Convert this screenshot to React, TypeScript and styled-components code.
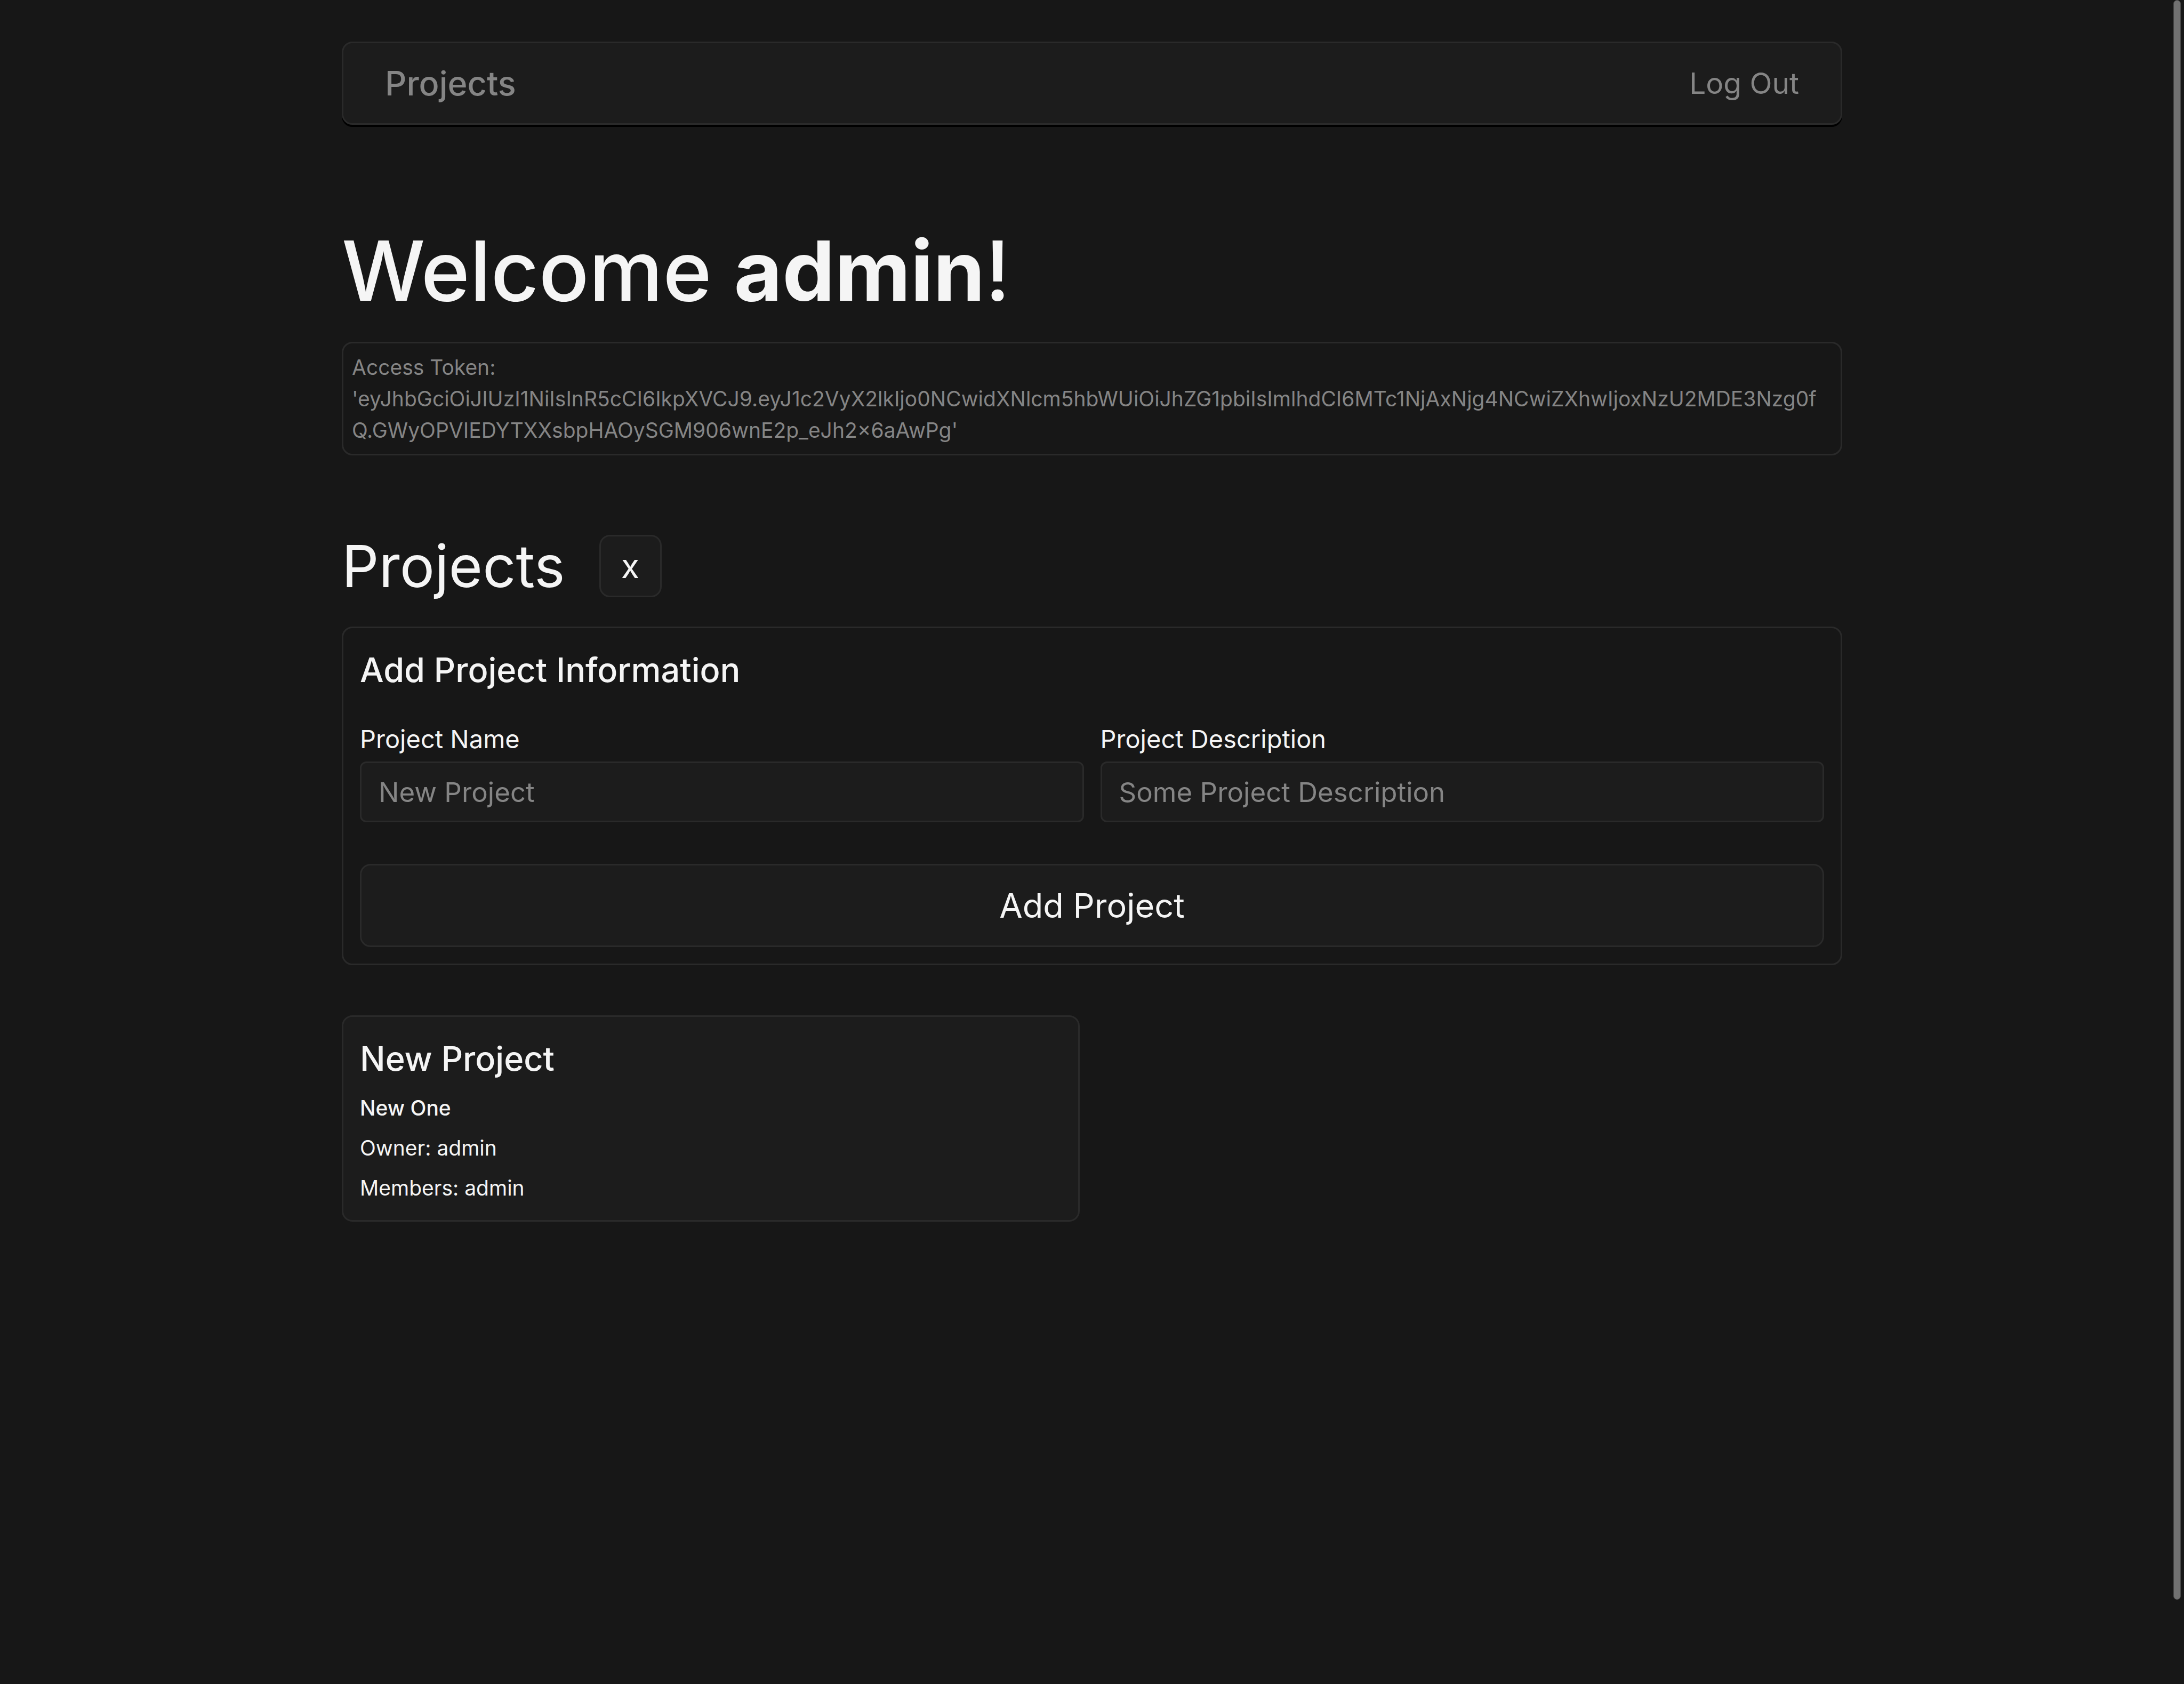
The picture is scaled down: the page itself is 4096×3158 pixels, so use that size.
import { useState } from "react";
import styled, { createGlobalStyle, css } from "styled-components";

const color = {
  page: "#171717",
  surface: "#1c1c1c",
  line: "#2a2a2a",
  text: "#f5f5f5",
  muted: "#858585",
  thumb: "#717171",
  thumbEdge: "#484848",
};

const GlobalStyle = createGlobalStyle`
  *, *::before, *::after { box-sizing: border-box; }
  body {
    margin: 0;
    background: ${color.page};
    color: ${color.text};
    font-family: Inter, "Liberation Sans", sans-serif;
    font-size: 39px;
    line-height: 59px;
  }
  h1, h2, h3, p { margin: 0; }
  button, input { font-family: inherit; color: inherit; }
`;

const outlined = css`
  border: 3px solid ${color.line};
  border-radius: 20px;
`;

const Page = styled.div`
  min-height: 100vh;
  padding: 78px 32px;
`;

const Container = styled.div`
  max-width: 2814px;
  margin: 0 auto;
`;

const NavBar = styled.nav`
  ${outlined}
  display: flex;
  align-items: center;
  justify-content: space-between;
  min-height: 156px;
  padding: 0 78px;
  background: ${color.surface};
  box-shadow: 0 4px 0 #000;
`;

const NavLink = styled.a<{ $brand?: boolean }>`
  color: ${color.muted};
  font-size: ${(p) => (p.$brand ? 63 : 55)}px;
  font-weight: ${(p) => (p.$brand ? 500 : 400)};
  line-height: 94px;
  text-decoration: none;
`;

const Welcome = styled.h1`
  margin-top: 157px;
  font-size: 156px;
  font-weight: 500;
  line-height: 234px;
`;

const TokenBox = styled.p`
  ${outlined}
  margin-top: 16px;
  padding: 15px 16px;
  color: ${color.muted};
  overflow-wrap: anywhere;
`;

const SectionHead = styled.div`
  display: flex;
  align-items: center;
  gap: 64px;
  margin-top: 125px;
`;

const SectionTitle = styled.h2`
  font-size: 109px;
  font-weight: 400;
  line-height: 164px;
`;

const Button = styled.button<{ $square?: boolean }>`
  ${outlined}
  width: ${(p) => (p.$square ? "117px" : "100%")};
  height: ${(p) => (p.$square ? 117 : 156)}px;
  padding: 0;
  background: ${color.surface};
  font-size: 63px;
  line-height: 94px;
  cursor: pointer;
`;

const Form = styled.form`
  ${outlined}
  margin-top: 32px;
  padding: 31px;
`;

const BlockTitle = styled.h3`
  font-size: 63px;
  font-weight: 500;
  line-height: 94px;
`;

const Fields = styled.div`
  display: grid;
  grid-template-columns: 1fr 1fr;
  gap: 31px;
  margin: 48px 0 78px;
`;

const Field = styled.div`
  display: flex;
  flex-direction: column;
  gap: 7px;
`;

const Label = styled.label`
  font-size: 47px;
  line-height: 70px;
`;

const TextInput = styled.input`
  width: 100%;
  height: 114px;
  padding: 0 32px;
  border: 3px solid ${color.line};
  border-radius: 12px;
  background: ${color.surface};
  font-size: 51px;
  outline: none;

  &::placeholder {
    color: ${color.muted};
    opacity: 1;
  }
`;

const ProjectGrid = styled.div`
  display: grid;
  grid-template-columns: 1fr 1fr;
  gap: 47px;
  margin-top: 94px;
`;

const ProjectCard = styled.article`
  ${outlined}
  display: flex;
  flex-direction: column;
  gap: 16px;
  padding: 31px;
  background: ${color.surface};
`;

const CardText = styled.p<{ $strong?: boolean }>`
  font-weight: ${(p) => (p.$strong ? 500 : 400)};
`;

const ScrollThumb = styled.div`
  position: fixed;
  top: 0;
  right: 6px;
  width: 14px;
  height: 95vh;
  border: 1px solid ${color.thumbEdge};
  border-radius: 7px;
  background: ${color.thumb};
`;

const token =
  "eyJhbGciOiJIUzI1NiIsInR5cCI6IkpXVCJ9.eyJ1c2VyX2lkIjo0NCwidXNlcm5hbWUiOiJhZG1pbiIsImlhdCI6MTc1NjAxNjg4NCwiZXhwIjoxNzU2MDE3Nzg0fQ.GWyOPVIEDYTXXsbpHAOySGM906wnE2p_eJh2x6aAwPg";

const projects = [
  { name: "New Project", description: "New One", owner: "admin", members: ["admin"] },
];

export default function App() {
  const [open, setOpen] = useState(true);

  return (
    <>
      <GlobalStyle />
      <Page>
        <Container>
          <NavBar>
            <NavLink $brand href="#projects">Projects</NavLink>
            <NavLink href="#logout">Log Out</NavLink>
          </NavBar>

          <main>
            <Welcome>
              Welcome <b>admin</b>!
            </Welcome>
            <TokenBox>{`Access Token: '${token}'`}</TokenBox>

            <SectionHead id="projects">
              <SectionTitle>Projects</SectionTitle>
              <Button $square type="button" onClick={() => setOpen(!open)}>
                {open ? "x" : "+"}
              </Button>
            </SectionHead>

            {open && (
              <Form onSubmit={(e) => e.preventDefault()}>
                <BlockTitle>Add Project Information</BlockTitle>
                <Fields>
                  <Field>
                    <Label htmlFor="name">Project Name</Label>
                    <TextInput id="name" type="text" placeholder="New Project" />
                  </Field>
                  <Field>
                    <Label htmlFor="description">Project Description</Label>
                    <TextInput id="description" type="text" placeholder="Some Project Description" />
                  </Field>
                </Fields>
                <Button type="submit">Add Project</Button>
              </Form>
            )}

            <ProjectGrid>
              {projects.map((p) => (
                <ProjectCard key={p.name}>
                  <BlockTitle>{p.name}</BlockTitle>
                  <CardText $strong>{p.description}</CardText>
                  <CardText>{`Owner: ${p.owner}`}</CardText>
                  <CardText>{`Members: ${p.members.join(", ")}`}</CardText>
                </ProjectCard>
              ))}
            </ProjectGrid>
          </main>
        </Container>
      </Page>
      <ScrollThumb />
    </>
  );
}
